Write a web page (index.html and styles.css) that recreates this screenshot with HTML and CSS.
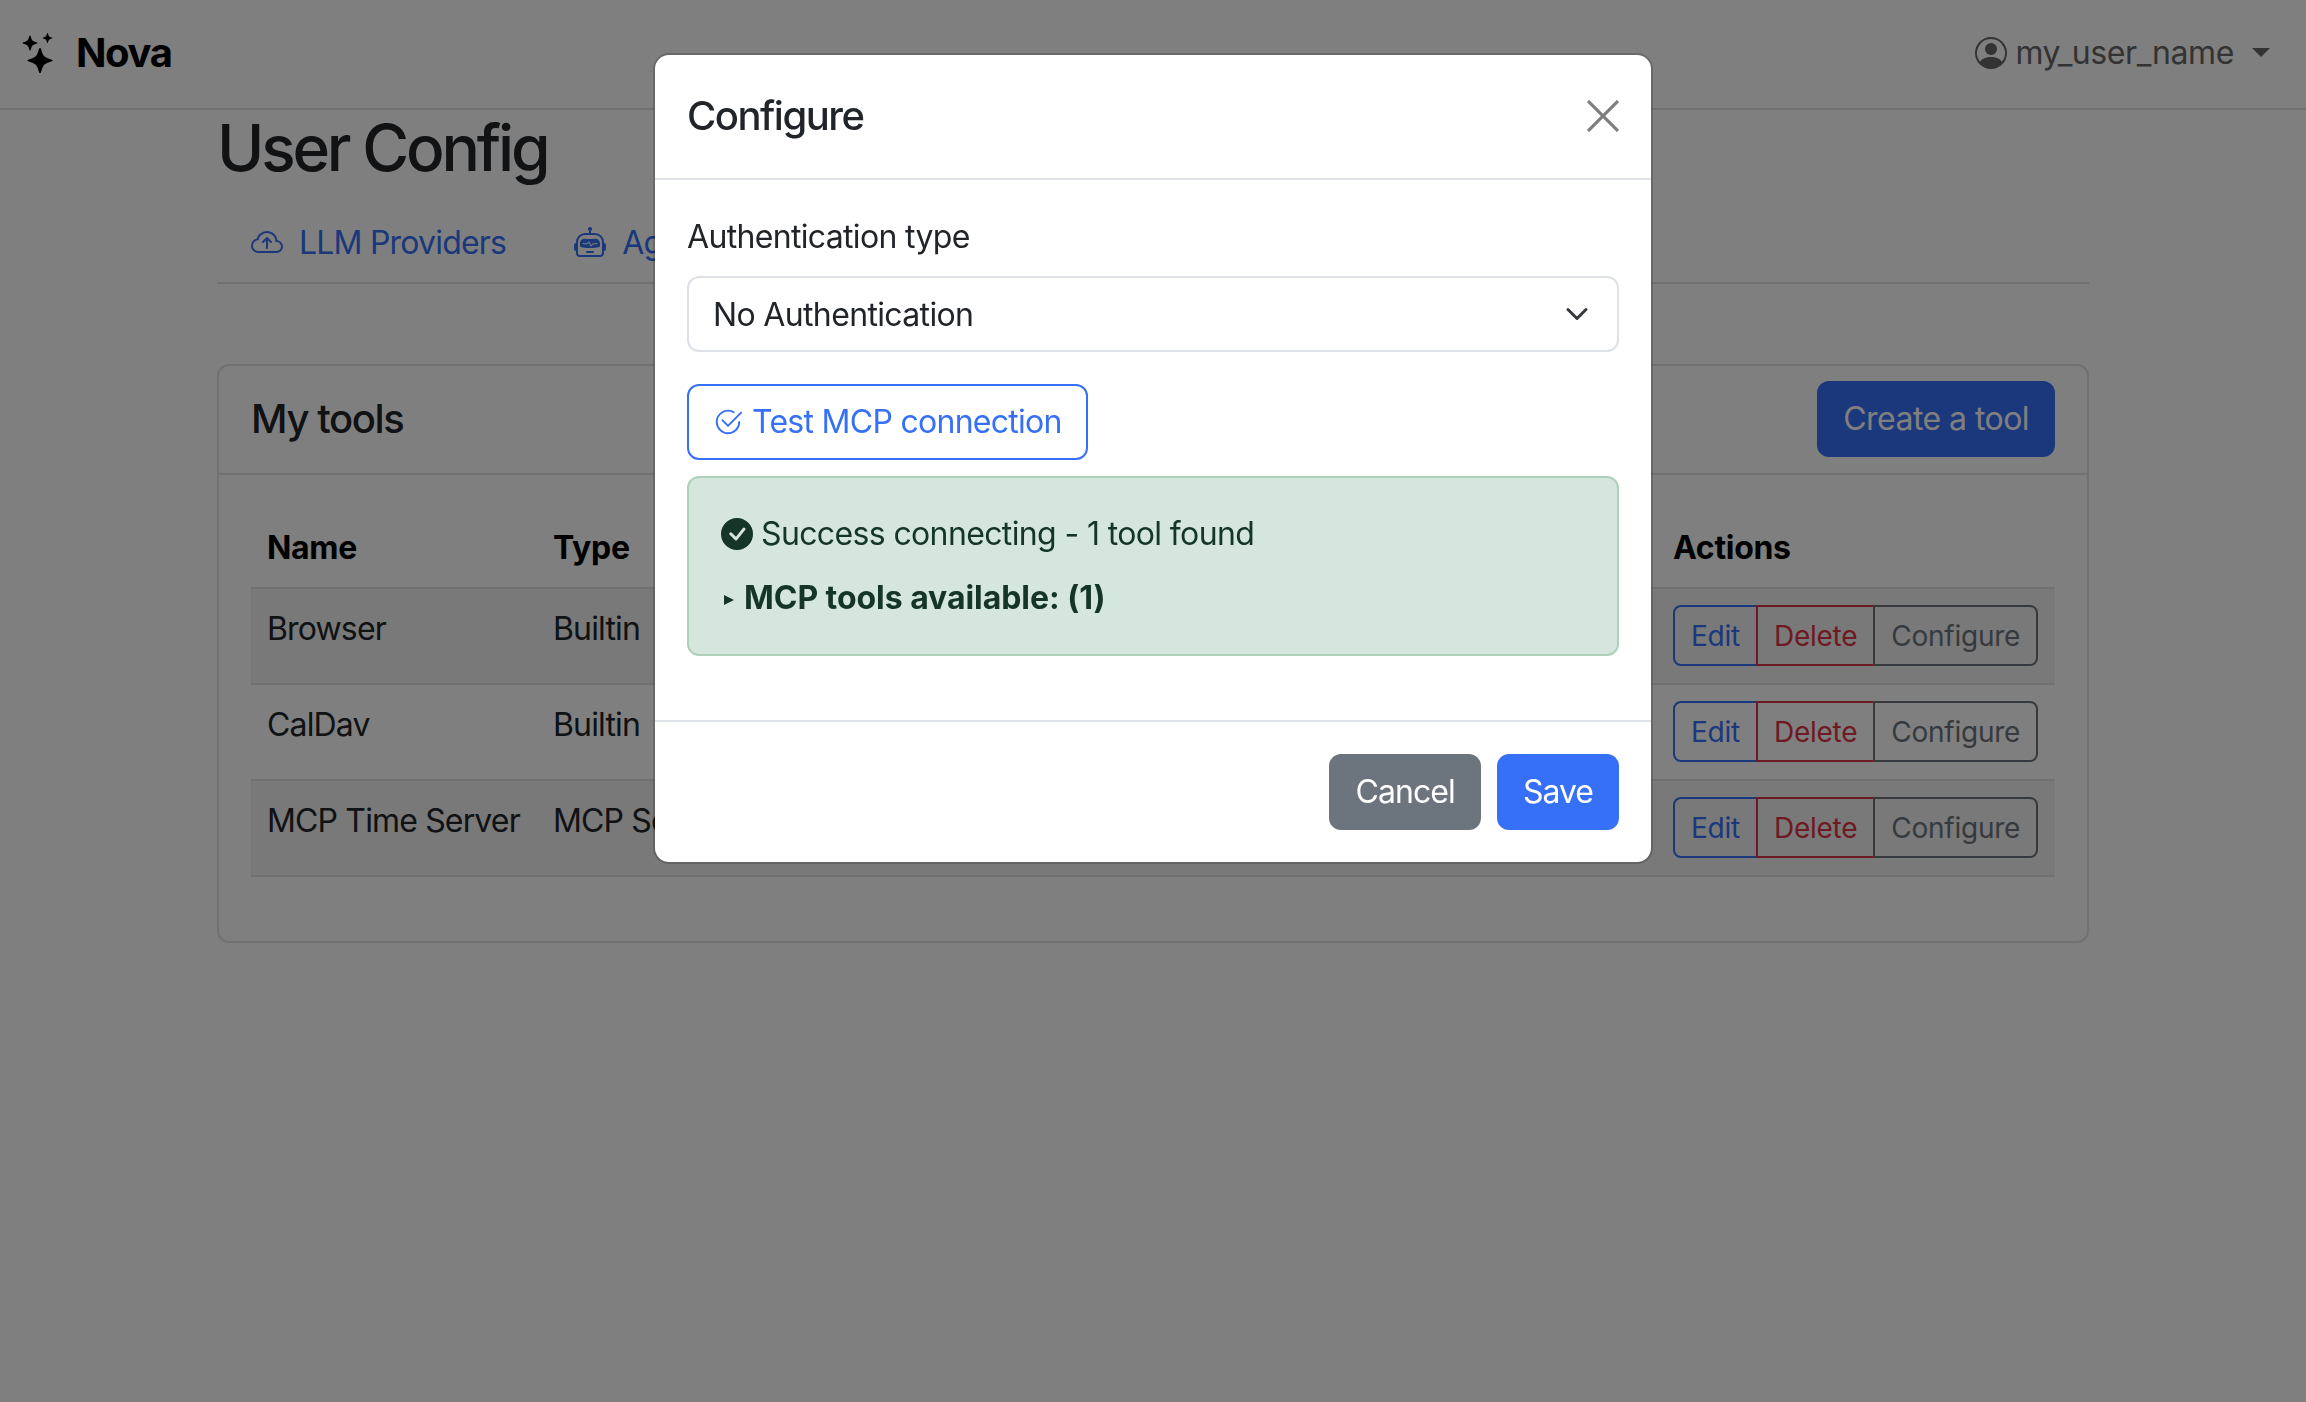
FILE: index.html
```html
<!DOCTYPE html>
<html>
<head>
  <title>User Config</title>
  <link rel="stylesheet" href="styles.css">
</head>
<body>
  <nav class="navbar">
    <a class="brand">
      <svg class="brand-icon" viewBox="0 0 16 16" fill="currentColor"><path d="M7.657 6.247c.11-.33.576-.33.686 0l.645 1.937a2.89 2.89 0 0 0 1.829 1.828l1.936.645c.33.11.33.576 0 .686l-1.937.645a2.89 2.89 0 0 0-1.828 1.829l-.645 1.936a.361.361 0 0 1-.686 0l-.645-1.937a2.89 2.89 0 0 0-1.828-1.828l-1.937-.645a.361.361 0 0 1 0-.686l1.937-.645a2.89 2.89 0 0 0 1.828-1.828zM3.794 1.148a.217.217 0 0 1 .412 0l.387 1.162c.173.518.579.924 1.097 1.097l1.162.387a.217.217 0 0 1 0 .412l-1.162.387A1.73 1.73 0 0 0 4.593 5.69l-.387 1.162a.217.217 0 0 1-.412 0L3.407 5.69A1.73 1.73 0 0 0 2.31 4.593l-1.162-.387a.217.217 0 0 1 0-.412l1.162-.387A1.73 1.73 0 0 0 3.407 2.31zM10.863.099a.145.145 0 0 1 .274 0l.258.774c.115.346.386.617.732.732l.774.258a.145.145 0 0 1 0 .274l-.774.258a1.16 1.16 0 0 0-.732.732l-.258.774a.145.145 0 0 1-.274 0l-.258-.774a1.16 1.16 0 0 0-.732-.732L9.1 2.137a.145.145 0 0 1 0-.274l.774-.258c.346-.115.617-.386.732-.732z"/></svg>
      <span>Nova</span>
    </a>
    <div class="user-menu">
      <svg class="user-icon" viewBox="0 0 16 16" fill="currentColor"><path d="M11 6a3 3 0 1 1-6 0 3 3 0 0 1 6 0"/><path fill-rule="evenodd" d="M0 8a8 8 0 1 1 16 0A8 8 0 0 1 0 8m8-7a7 7 0 0 0-5.468 11.37C3.242 11.226 4.805 10 8 10s4.757 1.225 5.468 2.37A7 7 0 0 0 8 1"/></svg>
      <span>my_user_name</span>
      <span class="caret"></span>
    </div>
  </nav>

  <main class="container">
    <h2 class="page-title">User Config</h2>

    <ul class="tabs">
      <li class="tab">
        <svg class="tab-icon" viewBox="0 0 16 16" fill="currentColor"><path fill-rule="evenodd" d="M7.646 5.146a.5.5 0 0 1 .708 0l2 2a.5.5 0 0 1-.708.708L8.5 6.707V10.5a.5.5 0 0 1-1 0V6.707L6.354 7.854a.5.5 0 1 1-.708-.708z"/><path d="M4.406 3.342A5.53 5.53 0 0 1 8 2c2.69 0 4.923 2 5.166 4.579C14.758 6.804 16 8.137 16 9.773 16 11.569 14.502 13 12.687 13H3.781C1.708 13 0 11.366 0 9.318c0-1.763 1.266-3.223 2.942-3.593.143-.863.698-1.723 1.464-2.383m.653.757c-.757.653-1.153 1.44-1.153 2.056v.448l-.445.049C2.064 6.805 1 7.952 1 9.318 1 10.785 2.23 12 3.781 12h8.906C13.98 12 15 10.988 15 9.773c0-1.216-1.02-2.228-2.313-2.228h-.5v-.5C12.188 4.825 10.328 3 8 3a4.53 4.53 0 0 0-2.941 1.1z"/></svg>
        LLM Providers
      </li>
      <li class="tab">
        <svg class="tab-icon" viewBox="0 0 16 16" fill="currentColor"><path d="M6 12.5a.5.5 0 0 1 .5-.5h3a.5.5 0 0 1 0 1h-3a.5.5 0 0 1-.5-.5M3 8.062C3 6.76 4.235 5.765 5.53 5.886a26.6 26.6 0 0 0 4.94 0C11.765 5.765 13 6.76 13 8.062v1.157a.93.93 0 0 1-.765.935c-.845.147-2.34.346-4.235.346s-3.39-.2-4.235-.346A.93.93 0 0 1 3 9.219zm4.542-.827a.25.25 0 0 0-.217.068l-.92.9a25 25 0 0 1-1.871-.183.25.25 0 0 0-.068.495c.55.076 1.232.149 2.02.193a.25.25 0 0 0 .189-.071l.754-.736.847 1.71a.25.25 0 0 0 .404.062l.932-.97a25 25 0 0 0 1.922-.188.25.25 0 0 0-.068-.495c-.538.074-1.207.145-1.98.189a.25.25 0 0 0-.166.076l-.754.785-.842-1.7a.25.25 0 0 0-.182-.135"/><path d="M8.5 1.866a1 1 0 1 0-1 0V3h-2A4.5 4.5 0 0 0 1 7.5V8a1 1 0 0 0-1 1v2a1 1 0 0 0 1 1v1a2 2 0 0 0 2 2h10a2 2 0 0 0 2-2v-1a1 1 0 0 0 1-1V9a1 1 0 0 0-1-1v-.5A4.5 4.5 0 0 0 10.5 3h-2zM14 7.5V13a1 1 0 0 1-1 1H3a1 1 0 0 1-1-1V7.5A3.5 3.5 0 0 1 5.5 4h5A3.5 3.5 0 0 1 14 7.5"/></svg>
        Agents
      </li>
    </ul>

    <section class="card">
      <div class="card-header">
        <h4 class="card-title">My tools</h4>
        <button class="btn btn-primary">Create a tool</button>
      </div>
      <div class="card-body">
        <table class="tools-table">
          <thead>
            <tr>
              <th class="col-name">Name</th>
              <th>Type</th>
              <th class="col-actions">Actions</th>
            </tr>
          </thead>
          <tbody>
            <tr class="striped">
              <td>Browser</td>
              <td>Builtin</td>
              <td>
                <div class="btn-group"><button class="btn-sm edit">Edit</button><button class="btn-sm delete">Delete</button><button class="btn-sm conf">Configure</button></div>
              </td>
            </tr>
            <tr>
              <td>CalDav</td>
              <td>Builtin</td>
              <td>
                <div class="btn-group"><button class="btn-sm edit">Edit</button><button class="btn-sm delete">Delete</button><button class="btn-sm conf">Configure</button></div>
              </td>
            </tr>
            <tr class="striped">
              <td>MCP Time Server</td>
              <td>MCP Server</td>
              <td>
                <div class="btn-group"><button class="btn-sm edit">Edit</button><button class="btn-sm delete">Delete</button><button class="btn-sm conf">Configure</button></div>
              </td>
            </tr>
          </tbody>
        </table>
      </div>
    </section>
  </main>

  <!-- modal sits over the page -->
  <div class="backdrop">
    <div class="modal">
      <div class="modal-header">
        <h5 class="modal-title">Configure</h5>
        <svg class="close-icon" viewBox="0 0 16 16" fill="none" stroke="currentColor" stroke-width="1.6"><path d="M.5.5l15 15M15.5.5l-15 15"/></svg>
      </div>
      <div class="modal-body">
        <label class="form-label" for="auth">Authentication type</label>
        <select class="form-select" id="auth">
          <option>No Authentication</option>
        </select>
        <button class="btn btn-outline">
          <svg class="test-icon" viewBox="0 0 16 16" fill="currentColor"><path d="M2.5 8a5.5 5.5 0 0 1 8.25-4.764.5.5 0 0 0 .5-.866A6.5 6.5 0 1 0 14.5 8a.5.5 0 0 0-1 0 5.5 5.5 0 1 1-11 0"/><path d="M15.354 3.354a.5.5 0 0 0-.708-.708L8 9.293 5.354 6.646a.5.5 0 1 0-.708.708l3 3a.5.5 0 0 0 .708 0z"/></svg>
          Test MCP connection
        </button>
        <div class="alert">
          <div class="alert-line">
            <svg class="alert-icon" viewBox="0 0 16 16" fill="currentColor"><path d="M16 8A8 8 0 1 1 0 8a8 8 0 0 1 16 0m-3.97-3.03a.75.75 0 0 0-1.08.022L7.477 9.417 5.384 7.323a.75.75 0 0 0-1.06 1.06L6.97 11.03a.75.75 0 0 0 1.079-.02l3.992-4.99a.75.75 0 0 0-.01-1.05z"/></svg>
            Success connecting - 1 tool found
          </div>
          <details class="tools-found">
            <summary>MCP tools available: (1)</summary>
          </details>
        </div>
      </div>
      <div class="modal-footer">
        <button class="btn btn-secondary">Cancel</button>
        <button class="btn btn-save">Save</button>
      </div>
    </div>
  </div>
</body>
</html>
```

FILE: styles.css
```css
* { box-sizing: border-box; }
body { margin: 0; font-family: Inter, "Liberation Sans", sans-serif; font-size: 32px; line-height: 48px; color: #212529; background: #fff; letter-spacing: -0.8px; }
h2, h4, h5 { margin: 0; font-weight: 500; }
button, select { font-family: inherit; letter-spacing: inherit; }

.navbar { height: 110px; display: flex; justify-content: space-between; align-items: center; padding: 0 36px 3px 20px; border-bottom: 2px solid #dee2e6; }
.brand { display: flex; align-items: center; gap: 16px; color: #000; font-size: 40px; font-weight: 700; letter-spacing: -1.4px; }
.brand-icon { width: 40px; height: 40px; }
.user-menu { display: flex; align-items: center; gap: 8px; color: #666; letter-spacing: -0.4px; }
.user-icon { width: 32px; height: 32px; }
.caret { width: 0; height: 0; margin-left: 10px; border: 9px solid transparent; border-top-color: #666; border-bottom: 0; }

.container { width: 1872px; margin: 0 auto; }
.page-title { font-size: 64px; line-height: 75px; margin-bottom: 18px; letter-spacing: -3.2px; }

.tabs { display: flex; list-style: none; margin: 0 0 80px; padding: 0; border-bottom: 2px solid #dee2e6; }
.tab { display: flex; align-items: center; gap: 16px; padding: 16px 34px; color: #3570f6; height: 79px; }
.tab-icon { width: 32px; height: 32px; }

.card { border: 2px solid #dee2e6; border-radius: 12px; }
.card-header { display: flex; justify-content: space-between; align-items: center; padding: 15px 32px 16px; border-bottom: 2px solid #dee2e6; }
.card-title { font-size: 40px; letter-spacing: -1.4px; }
.card-body { padding: 32px; }

.tools-table { width: 100%; table-layout: fixed; border-collapse: collapse; margin-bottom: 32px; }
.tools-table th { text-align: left; padding: 17px 16px 15px; font-weight: 700; color: #000; border-bottom: 2px solid #dee2e6; letter-spacing: -0.3px; }
.tools-table td { padding: 16px 16px 17px; vertical-align: top; border-bottom: 2px solid #dee2e6; white-space: nowrap; overflow: hidden; letter-spacing: -0.85px; }
.col-name { width: 286px; }
.col-actions { width: 398px; }
.striped td { background: #f2f2f2; }

.btn { height: 76px; padding: 12px 24px; font-size: 32px; line-height: 48px; border: 2px solid transparent; border-radius: 12px; }
.btn-primary { background: #3570f6; color: #fff; letter-spacing: -0.55px; }
.btn-secondary { background: #6c757d; color: #fff; letter-spacing: -0.9px; }
.btn-save { background: #3570f6; color: #fff; letter-spacing: -1px; }
.btn-outline { display: flex; align-items: center; gap: 9px; background: #fff; color: #3570f6; border-color: #3570f6; margin-bottom: 16px; letter-spacing: -0.72px; }

.btn-group { display: flex; }
.btn-sm { height: 61px; padding: 8px 16px; font-size: 28px; line-height: 42px; background: transparent; border: 2px solid; margin-left: -2px; letter-spacing: -0.25px; }
.btn-sm:first-child { margin-left: 0; border-radius: 8px 0 0 8px; }
.btn-sm:last-child { border-radius: 0 8px 8px 0; }
.edit { color: #3570f6; border-color: #3570f6; }
.delete { color: #dc3545; border-color: #dc3545; }
.conf { color: #6c757d; border-color: #6c757d; }

.backdrop { position: fixed; top: 0; left: 0; right: 0; bottom: 0; background: rgba(0,0,0,.5); }
.modal { width: 1000px; margin: 53px auto 0; background: #fff; border: 2px solid rgba(0,0,0,.175); border-radius: 16px; background-clip: padding-box; }
.modal-header { display: flex; justify-content: space-between; align-items: center; padding: 30px 32px 32px; height: 125px; border-bottom: 2px solid #dee2e6; }
.modal-title { font-size: 40px; line-height: 60px; letter-spacing: -1.5px; }
.close-icon { width: 32px; height: 32px; color: #7f7f7f; }
.modal-body { padding: 33px 32px 64px; }
.form-label { display: block; margin-bottom: 15px; letter-spacing: -0.67px; }
.form-select { display: block; width: 100%; height: 76px; padding: 0 24px; margin-bottom: 32px; font-size: 32px; color: #212529; background: #fff url("data:image/svg+xml,%3csvg xmlns='http://www.w3.org/2000/svg' viewBox='0 0 16 16'%3e%3cpath fill='none' stroke='%23343a40' stroke-linecap='round' stroke-linejoin='round' stroke-width='2' d='m2 5 6 6 6-6'/%3e%3c/svg%3e") no-repeat right 24px center / 32px 24px; border: 2px solid #dee2e6; border-radius: 12px; appearance: none; letter-spacing: -0.65px; }
.test-icon { width: 30px; height: 30px; }

.alert { padding: 32px; background: #d5e6de; border: 2px solid #afd0bb; border-radius: 12px; color: #143527; }
.alert-line { display: flex; align-items: center; gap: 8px; margin-bottom: 16px; letter-spacing: -0.63px; }
.alert-icon { width: 32px; height: 32px; }
.tools-found summary { list-style: none; font-weight: 700; letter-spacing: -0.05px; }
.tools-found summary::before { content: ""; display: inline-block; margin: 0 10px 4px 3px; border-left: 10px solid #143527; border-top: 5.5px solid transparent; border-bottom: 5.5px solid transparent; }

.modal-footer { display: flex; justify-content: flex-end; gap: 16px; padding: 32px; border-top: 2px solid #dee2e6; }
```
